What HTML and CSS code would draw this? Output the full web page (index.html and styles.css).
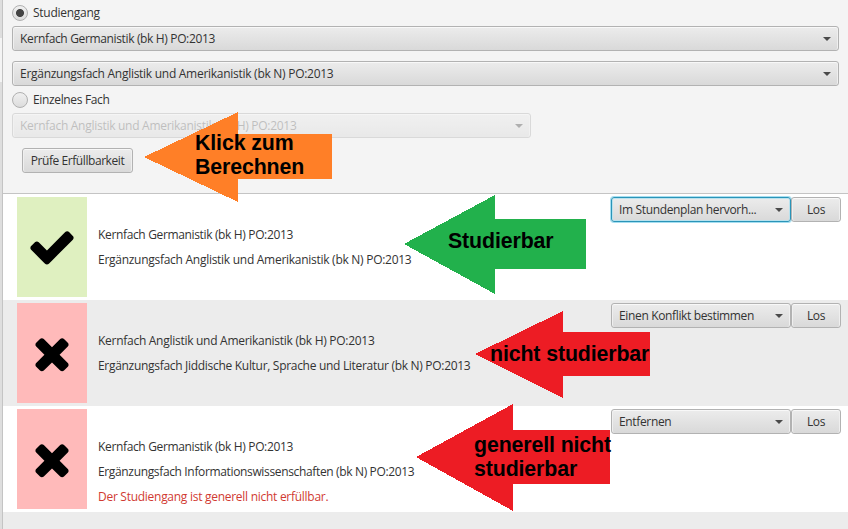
FILE: index.html
```html
<!DOCTYPE html>
<html lang="de">
<head>
<meta charset="utf-8">
<title>Studiengang prüfen</title>
<link rel="stylesheet" href="styles.css">
</head>
<body>
<svg class="defs" width="0" height="0" aria-hidden="true">
  <symbol id="check" viewBox="0 0 1792 1792"><path d="M1671 566q0 40-28 68l-724 724-136 136q-28 28-68 28t-68-28l-136-136-362-362q-28-28-28-68t28-68l136-136q28-28 68-28t68 28l294 295 656-657q28-28 68-28t68 28l136 136q28 28 28 68z"/></symbol>
  <symbol id="times" viewBox="0 0 1792 1792"><path d="M1490 1322q0 40-28 68l-136 136q-28 28-68 28t-68-28l-294-294-294 294q-28 28-68 28t-68-28l-136-136q-28-28-28-68t28-68l294-294-294-294q-28-28-28-68t28-68l136-136q28-28 68-28t68 28l294 294 294-294q28-28 68-28t68 28l136 136q28 28 28 68t-28 68l-294 294 294 294q28 28 28 68z"/></symbol>
</svg>
<div class="app">
  <div class="edge"><div class="edge-gap"></div></div>
  <main class="panel">
    <section class="form">
      <div class="radio first"><i class="dot on"></i><span class="t wide">Studiengang</span></div>
      <div class="combo"><span class="t">Kernfach Germanistik (bk H) PO:2013</span><i class="arrow"></i></div>
      <div class="combo second"><span class="t wide">Ergänzungsfach Anglistik und Amerikanistik (bk N) PO:2013</span><i class="arrow"></i></div>
      <div class="radio"><i class="dot"></i><span class="t">Einzelnes Fach</span></div>
      <div class="combo disabled"><span class="t wide">Kernfach Anglistik und Amerikanistik (bk H) PO:2013</span><i class="arrow"></i></div>
      <div class="button check"><span class="t tight">Prüfe Erfüllbarkeit</span></div>
    </section>
    <section class="list">
      <div class="row">
        <div class="tile ok"><svg><use href="#check"/></svg></div>
        <div class="info"><p class="t">Kernfach Germanistik (bk H) PO:2013</p><p class="t wide">Ergänzungsfach Anglistik und Amerikanistik (bk N) PO:2013</p></div>
        <div class="actions"><div class="combo focus"><span class="t">Im Stundenplan hervorh...</span><i class="arrow"></i></div><div class="button los"><span class="t">Los</span></div></div>
      </div>
      <div class="row odd">
        <div class="tile bad"><svg><use href="#times"/></svg></div>
        <div class="info"><p class="t wide">Kernfach Anglistik und Amerikanistik (bk H) PO:2013</p><p class="t mid">Ergänzungsfach Jiddische Kultur, Sprache und Literatur (bk N) PO:2013</p></div>
        <div class="actions"><div class="combo"><span class="t">Einen Konflikt bestimmen</span><i class="arrow"></i></div><div class="button los"><span class="t">Los</span></div></div>
      </div>
      <div class="row">
        <div class="tile bad"><svg><use href="#times"/></svg></div>
        <div class="info"><p class="t">Kernfach Germanistik (bk H) PO:2013</p><p class="t">Ergänzungsfach Informationswissenschaften (bk N) PO:2013</p><p class="t wide error">Der Studiengang ist generell nicht erfüllbar.</p></div>
        <div class="actions"><div class="combo"><span class="t">Entfernen</span><i class="arrow"></i></div><div class="button los"><span class="t">Los</span></div></div>
      </div>
    </section>
  </main>
  <svg class="callouts" viewBox="0 0 848 529" shape-rendering="crispEdges">
    <path fill="#ff7f27" d="M144 157L238 112V134H332V179H238V202Z"/>
    <path fill="#22b14c" d="M404 244L495 195V219H586V269H495V294Z"/>
    <path fill="#ed1c24" d="M475 354L563 311V332H650V376H563V398Z"/>
    <path fill="#ed1c24" d="M416 457L513 404V430H610V484H513V511Z"/>
  </svg>
  <div class="note n1">Klick zum<br>Berechnen</div>
  <div class="note n2">Studierbar</div>
  <div class="note n3">nicht studierbar</div>
  <div class="note n4">generell nicht<br>studierbar</div>
</div>
</body>
</html>
```
FILE: styles.css
```css
* { box-sizing: border-box; }
body { margin: 0; overflow: hidden; font: 12px/16px "Open Sans", "Noto Sans", sans-serif; color: #333; }
.defs { position: absolute; }
.app { position: relative; display: flex; width: 848px; height: 529px; background: #f4f4f4; }
.edge { width: 3px; padding-top: 38px; background: #dedede; border-right: 1px solid #c4c4c4; }
.edge-gap { height: 44px; background: #f4f4f4; }
.panel { flex: 1; display: flex; flex-direction: column; min-width: 0; }
.t { letter-spacing: -0.35px; white-space: nowrap; }
.wide { letter-spacing: -0.275px; }
.mid { letter-spacing: -0.3px; }
.tight { letter-spacing: -0.43px; }

.form { height: 194px; padding: 5px 9px 0; border-bottom: 1px solid #c4c4c4; }
.radio { display: flex; align-items: center; gap: 5px; height: 16px; margin: 6px 0 5px; }
.radio.first { margin: 0 0 5px; }
.dot { width: 16px; height: 16px; border: 1px solid #b0b0b0; border-radius: 50%; background: linear-gradient(#f0f0f0, #dcdcdc); }
.dot.on { background: radial-gradient(circle, #444 3.6px, transparent 4.4px), linear-gradient(#f0f0f0, #dcdcdc); }
.combo, .button {
  display: flex; align-items: center; height: 25px; padding: 0 7px;
  border: 1px solid #b2b2b2; border-radius: 3px;
  background: linear-gradient(#ececec, #d9d9d9); box-shadow: inset 0 1px #f8f8f8, inset 1px 0 #efefef, inset -1px 0 #efefef;
}
.combo { justify-content: space-between; }
.combo.second { margin-top: 10px; }
.arrow { border: solid transparent; border-width: 4px 4px 0; border-top-color: #4a4a4a; }
.disabled { width: 519px; opacity: .4; }
.disabled .t { opacity: .65; }
.button { justify-content: center; padding: 0; }
.button.check { width: 111px; margin: 10px 0 0 10px; }

.list { flex: 1; background: #ececec; }
.row { display: flex; height: 106px; padding: 3px 7px 3px 14px; background: #fff; }
.row.odd { background: #ececec; }
.tile { display: flex; align-items: center; justify-content: center; width: 70px; height: 100px; }
.tile svg { width: 50px; height: 50px; }
.ok { background: #dff0c0; }
.bad { background: #ffbaba; }
.info { flex: 1; padding: 30px 0 0 11px; }
.info p { margin: 0 0 9px; }
.info .error { color: #d13a32; }
.actions { display: flex; }
.actions .combo { width: 180px; }
.actions .los { width: 50px; }
.actions .focus { border-color: #2a94b8; box-shadow: 0 0 0 1px #a5def0, inset 0 0 0 1px #b9e2ee; }

.callouts { position: absolute; left: 0; top: 0; width: 848px; height: 529px; }
.note { position: absolute; font: bold 21.33px/24px "Liberation Sans", Arial, sans-serif; letter-spacing: -0.12px; color: #000; white-space: nowrap; }
.n1 { left: 195px; top: 131px; }
.n2 { left: 448px; top: 229px; }
.n3 { left: 490px; top: 342px; }
.n4 { left: 474px; top: 433px; }
```
